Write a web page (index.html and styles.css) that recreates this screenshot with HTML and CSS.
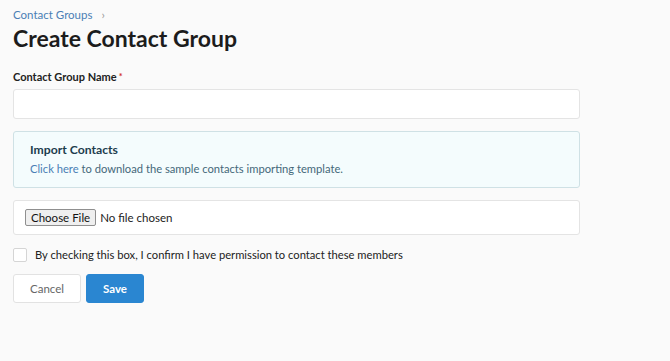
FILE: index.html
```html
<!DOCTYPE html>
<html lang="en">
  <head>
    <meta charset="UTF-8" />
    <title>Create Contact Group</title>
    <link rel="stylesheet" href="styles.css">
  </head>
  <body>
    <div class="page">
      <div class="breadcrumb">
        <a href="#">Contact Groups</a>
        <span class="sep">&rsaquo;</span>
      </div>
      <h1 class="title">Create Contact Group</h1>

      <form class="form">
        <label class="label" for="groupName">Contact Group Name<span class="req">*</span></label>
        <input id="groupName" class="text-input" type="text" />

        <div class="import-box">
          <div class="import-title">Import Contacts</div>
          <div class="import-text"><a href="#">Click here</a> to download the sample contacts importing template.</div>
        </div>

        <div class="file-box">
          <span class="file-btn">Choose File</span>
          <span class="file-text">No file chosen</span>
        </div>

        <label class="check-row">
          <span class="checkbox"></span>
          By checking this box, I confirm I have permission to contact these members
        </label>

        <div class="actions">
          <button type="button" class="btn btn-cancel">Cancel</button>
          <button type="button" class="btn btn-save">Save</button>
        </div>
      </form>
    </div>
  </body>
</html>
```

FILE: styles.css
```css
body {
  margin: 0;
  padding: 0;
  background-color: #fafafa;
  font-family: Lato, "Open Sans", sans-serif;
  color: #222;
}

.page {
  width: 567px;
  padding: 7px 13px 0;
}

.breadcrumb {
  font-size: 11.5px;
  line-height: 16px;
  display: flex;
  align-items: center;
  gap: 9px;
}

.breadcrumb a {
  color: #4a7fb5;
  text-decoration: none;
}

.sep {
  color: #999;
  font-size: 12px;
}

.title {
  margin: 1px 0 0;
  font-size: 23px;
  line-height: 29px;
  font-weight: 700;
  color: #1c1c1c;
}

.form {
  display: flex;
  flex-direction: column;
  margin-top: 17px;
}

.label {
  font-size: 11px;
  font-weight: 700;
  line-height: 14px;
  color: #222;
}

.req {
  color: #d0312d;
  font-size: 9px;
  vertical-align: top;
  margin-left: 2px;
}

.text-input {
  margin-top: 5px;
  height: 30px;
  box-sizing: border-box;
  border: 1px solid #e4e4e4;
  border-radius: 3px;
  background: #fff;
}

.import-box {
  margin-top: 12px;
  height: 57px;
  box-sizing: border-box;
  padding: 10px 16px;
  background: #f4fcfd;
  border: 1px solid #cfe1e5;
  border-radius: 3px;
}

.import-title {
  font-size: 12.2px;
  font-weight: 700;
  color: #1d3d4d;
  line-height: 16px;
}

.import-text {
  font-size: 11.2px;
  line-height: 16px;
  margin-top: 3px;
  color: #44687a;
}

.import-text a {
  color: #4a7fb5;
  text-decoration: none;
}

.file-box {
  margin-top: 12px;
  height: 35px;
  box-sizing: border-box;
  padding: 0 11px;
  display: flex;
  align-items: center;
  gap: 4px;
  background: #fff;
  border: 1px solid #e4e4e4;
  border-radius: 3px;
  font-size: 11.5px;
}

.file-btn {
  padding: 1px 5px;
  background: #efefef;
  border: 1px solid #8f8f8f;
  border-radius: 2px;
  color: #111;
}

.file-text {
  color: #222;
}

.check-row {
  margin-top: 13px;
  display: flex;
  align-items: center;
  gap: 8px;
  font-size: 11.2px;
  line-height: 14px;
  color: #222;
}

.checkbox {
  width: 12px;
  height: 12px;
  border: 1px solid #d5d5d5;
  border-radius: 2px;
  background: #fff;
}

.actions {
  margin-top: 12px;
  display: flex;
  gap: 5px;
}

.btn {
  height: 29px;
  border-radius: 3px;
  font-family: inherit;
  font-size: 11.5px;
  cursor: pointer;
}

.btn-cancel {
  width: 68px;
  background: #fff;
  border: 1px solid #e2e2e2;
  color: #666;
}

.btn-save {
  width: 58px;
  background: #2a86d1;
  border: 1px solid #2a86d1;
  color: #fff;
  font-weight: 700;
}
```
